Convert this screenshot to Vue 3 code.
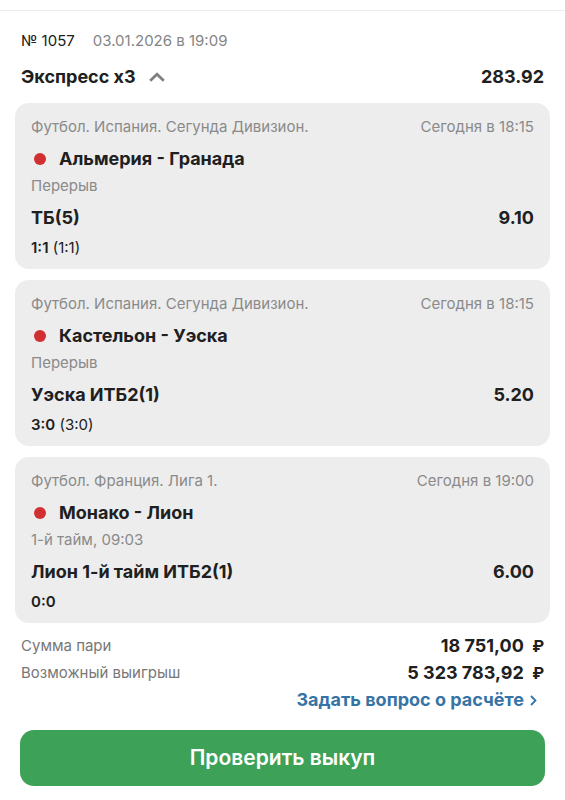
<script setup>
import { ref } from 'vue'

const open = ref(true)

const events = [
  {
    league: 'Футбол. Испания. Сегунда Дивизион.',
    time: 'Сегодня в 18:15',
    match: 'Альмерия - Гранада',
    status: 'Перерыв',
    bet: 'ТБ(5)',
    odds: '9.10',
    score: '1:1',
    half: '(1:1)'
  },
  {
    league: 'Футбол. Испания. Сегунда Дивизион.',
    time: 'Сегодня в 18:15',
    match: 'Кастельон - Уэска',
    status: 'Перерыв',
    bet: 'Уэска ИТБ2(1)',
    odds: '5.20',
    score: '3:0',
    half: '(3:0)'
  },
  {
    league: 'Футбол. Франция. Лига 1.',
    time: 'Сегодня в 19:00',
    match: 'Монако - Лион',
    status: '1-й тайм, 09:03',
    bet: 'Лион 1-й тайм ИТБ2(1)',
    odds: '6.00',
    score: '0:0',
    half: ''
  }
]
</script>

<template>
  <main class="coupon">
    <div class="meta">
      <span class="number">№ 1057</span>
      <span class="date">03.01.2026 в 19:09</span>
    </div>

    <div class="heading">
      <button class="toggle" type="button" :aria-expanded="open" @click="open = !open">
        <span>Экспресс x3</span>
        <svg class="chevron" :class="{ closed: !open }" width="16" height="10" viewBox="0 0 16 10">
          <path d="M1.2 8.8 8 2.2l6.8 6.6" fill="none" stroke="#808080" stroke-width="2.8" />
        </svg>
      </button>
      <span>283.92</span>
    </div>

    <div v-if="open" class="events">
      <article v-for="e in events" :key="e.match" class="card">
        <div class="row muted">
          <span>{{ e.league }}</span>
          <span>{{ e.time }}</span>
        </div>
        <div class="match"><span class="live"></span>{{ e.match }}</div>
        <div class="muted">{{ e.status }}</div>
        <div class="row bet">
          <span>{{ e.bet }}</span>
          <span>{{ e.odds }}</span>
        </div>
        <div class="score"><b>{{ e.score }}</b> {{ e.half }}</div>
      </article>
    </div>

    <div class="totals">
      <div class="row total">
        <span class="label">Сумма пари</span>
        <span class="sum">18 751,00 <span class="currency">₽</span></span>
      </div>
      <div class="row total">
        <span class="label">Возможный выигрыш</span>
        <span class="sum">5 323 783,92 <span class="currency">₽</span></span>
      </div>
      <a class="ask" href="#">
        Задать вопрос о расчёте
        <svg width="7" height="11" viewBox="0 0 7 11">
          <path d="M1 1l4.5 4.5L1 10" fill="none" stroke="#3574a5" stroke-width="1.8" />
        </svg>
      </a>
    </div>

    <button class="cashout" type="button">Проверить выкуп</button>
  </main>
</template>

<style>
body {
  background: #fff;
}
</style>

<style scoped>
.coupon {
  margin-top: 10px;
  padding: 20px 15px 13px;
  border-top: 1px solid #ebebeb;
  font-family: Inter, "Liberation Sans", sans-serif;
  font-size: 15px;
  line-height: 20px;
  color: #202020;
}
.meta {
  display: flex;
  gap: 18px;
  padding: 0 6px;
}
.date { color: #858585; }
.heading {
  display: flex;
  justify-content: space-between;
  margin-top: 14px;
  padding: 0 6px;
  font-size: 18px;
  font-weight: 700;
  line-height: 24px;
}
.toggle {
  display: flex;
  align-items: center;
  gap: 13px;
  padding: 0;
  border: 0;
  background: none;
  color: inherit;
  font: inherit;
  cursor: pointer;
}
.closed { transform: rotate(180deg); }
.events {
  display: grid;
  gap: 11px;
  margin-top: 14px;
}
.card {
  padding: 14px 16px 11px;
  border-radius: 14px;
  background: #ededed;
}
.row {
  display: flex;
  justify-content: space-between;
}
.muted { color: #8a8a8a; }
.match {
  display: flex;
  align-items: center;
  margin: 10px 0 5px;
  font-size: 18px;
  font-weight: 700;
  line-height: 24px;
}
.live {
  width: 12px;
  height: 12px;
  margin: 0 13px 0 3px;
  border-radius: 50%;
  background: #d13033;
}
.bet {
  margin: 10px 0 8px;
  font-size: 18px;
  font-weight: 700;
  line-height: 24px;
}
.score b { font-weight: 600; }
.totals {
  display: flex;
  flex-direction: column;
  gap: 3px;
  margin-top: 11px;
  padding: 0 6px;
}
.total {
  align-items: center;
  line-height: 24px;
}
.label { color: #777; }
.sum {
  font-size: 18px;
  font-weight: 700;
}
.currency {
  margin-left: 4px;
  font-size: 16px;
}
.ask {
  display: flex;
  align-items: center;
  align-self: flex-end;
  gap: 6px;
  padding-right: 7px;
  color: #3574a5;
  font-size: 18px;
  font-weight: 700;
  line-height: 24px;
  text-decoration: none;
}
.cashout {
  display: block;
  width: calc(100% - 10px);
  margin: 18px 5px 0;
  padding: 16px;
  border: 0;
  border-radius: 14px;
  background: #3da158;
  color: #fff;
  font: 600 21px/24px Inter, "Liberation Sans", sans-serif;
  cursor: pointer;
}
</style>
